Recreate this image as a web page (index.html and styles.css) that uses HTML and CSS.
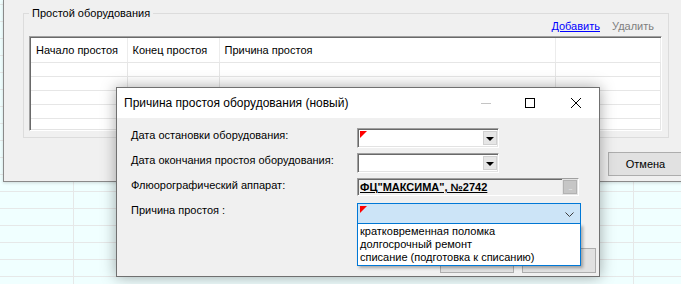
FILE: index.html
```html
<!DOCTYPE html>
<html lang="ru">
<head>
    <meta charset="UTF-8">
    <title>Простой оборудования</title>
    <link rel="stylesheet" href="styles.css">
</head>
<body>
<div class="main-window">
    <fieldset class="group">
        <legend>Простой оборудования</legend>
        <div class="group-links">
            <a href="#" class="link">Добавить</a>
            <span class="link disabled">Удалить</span>
        </div>
        <div class="grid">
            <table>
                <colgroup>
                    <col style="width: 96px">
                    <col style="width: 92px">
                    <col style="width: 336px">
                    <col>
                </colgroup>
                <tr class="grid-head">
                    <th>Начало простоя</th>
                    <th>Конец простоя</th>
                    <th>Причина простоя</th>
                    <th></th>
                </tr>
                <tr><td></td><td></td><td></td><td></td></tr>
                <tr><td></td><td></td><td></td><td></td></tr>
                <tr><td></td><td></td><td></td><td></td></tr>
                <tr><td></td><td></td><td></td><td></td></tr>
                <tr><td></td><td></td><td></td><td></td></tr>
            </table>
        </div>
    </fieldset>
    <div class="window-footer">
        <button class="btn">Отмена</button>
    </div>
</div>

<div class="dialog">
    <div class="titlebar">
        <span class="title">Причина простоя оборудования (новый)</span>
        <span class="tb-btn tb-min"><svg width="10" height="10" viewBox="0 0 10 10"><path d="M0 5.5h10" stroke="#c4c4c4" stroke-width="1"/></svg></span>
        <span class="tb-btn"><svg width="10" height="10" viewBox="0 0 10 10"><rect x="0.5" y="0.5" width="9" height="9" fill="none" stroke="#000" stroke-width="1"/></svg></span>
        <span class="tb-btn"><svg width="10" height="10" viewBox="0 0 10 10"><path d="M0 0L10 10M10 0L0 10" stroke="#000" stroke-width="1"/></svg></span>
    </div>
    <div class="dialog-body">
        <div class="form">
            <label class="form-label">Дата остановки оборудования:</label>
            <div class="date-box">
                <span class="required"></span>
                <span class="dd-btn"></span>
            </div>

            <label class="form-label">Дата окончания простоя оборудования:</label>
            <div class="date-box">
                <span class="dd-btn"></span>
            </div>

            <label class="form-label">Флюорографический аппарат:</label>
            <div class="ref-box">
                <span class="ref-text">ФЦ"МАКСИМА", №2742</span>
                <span class="ellipsis-btn">...</span>
            </div>

            <label class="form-label">Причина простоя :</label>
            <div class="combo">
                <span class="required"></span>
                <svg class="chevron" width="9" height="5" viewBox="0 0 9 5"><path d="M0.5 0.5L4.5 4.5L8.5 0.5" fill="none" stroke="#3c3c3c" stroke-width="1"/></svg>
                <ul class="combo-list">
                    <li>кратковременная поломка</li>
                    <li>долгосрочный ремонт</li>
                    <li>списание (подготовка к списанию)</li>
                </ul>
            </div>
        </div>
        <div class="dialog-buttons">
            <button class="btn dlg-btn"></button>
            <button class="btn dlg-btn"></button>
        </div>
    </div>
</div>
</body>
</html>
```

FILE: styles.css
```css
body {
    margin: 0;
    width: 681px;
    height: 284px;
    overflow: hidden;
    position: relative;
    font-family: "Liberation Sans", Arial, sans-serif;
    font-size: 11px;
    color: #000;
    background-color: #f0ffff;
    background-image:
        linear-gradient(#e6e8e8 1px, transparent 1px),
        linear-gradient(90deg, #e6e8e8 1px, transparent 1px);
    background-size: 100% 17px, 560px 100%;
    background-position: 0 4px, 73px 0;
}

/* окно позади */
.main-window {
    position: absolute;
    left: 3px;
    top: 0;
    width: 700px;
    height: 182px;
    box-sizing: border-box;
    padding: 6px 20px 0 19px;
    background-color: #f0f0f0;
    border-left: 1px solid #8a8a8a;
    border-bottom: 1px solid #8a8a8a;
    box-shadow: 0 1px 3px rgba(0, 0, 0, 0.15);
}

.group {
    width: 646px;
    box-sizing: border-box;
    margin: 0;
    padding: 0 6px 6px 5px;
    border: 1px solid #dcdcdc;
}

.group legend {
    padding: 0 3px;
    line-height: 14px;
}

.group-links {
    display: flex;
    justify-content: flex-end;
    gap: 12px;
    padding-right: 8px;
    margin-top: -1px;
    height: 14px;
    line-height: 14px;
    margin-bottom: 3px;
}

.link {
    color: #0000ff;
    text-decoration: underline;
}

.link.disabled {
    color: #7f7f7f;
    text-decoration: none;
}

.grid {
    height: 95px;
    box-sizing: border-box;
    overflow: hidden;
    background-color: #fff;
    border: 1px solid #ffffff;
    border-top-color: #a0a0a0;
    border-left-color: #a0a0a0;
    box-shadow: inset 1px 1px 0 #696969, inset -1px -1px 0 #e3e3e3;
    padding: 1px 0 0 1px;
}

.grid table {
    width: 100%;
    table-layout: fixed;
    border-collapse: collapse;
}

.grid th,
.grid td {
    padding: 0 0 0 5px;
    border-right: 1px solid #e6e6e6;
    border-bottom: 1px solid #e6e6e6;
    font-weight: normal;
    text-align: left;
    white-space: nowrap;
}

.grid-head th {
    height: 24px;
    border-right-color: #ececec;
}

.grid td {
    height: 13px;
}

.window-footer {
    display: flex;
    justify-content: flex-end;
    margin-top: 14px;
}

.btn {
    font-family: inherit;
    font-size: 11px;
    background-color: #e1e1e1;
    border: 1px solid #adadad;
    padding: 0;
    color: #000;
}

.window-footer .btn {
    width: 75px;
    height: 24px;
}

/* диалог */
.dialog {
    position: absolute;
    left: 116px;
    top: 87px;
    width: 484px;
    height: 190px;
    box-sizing: border-box;
    border: 1px solid #707070;
    background-color: #f0f0f0;
    box-shadow: 0 0 14px rgba(0, 0, 0, 0.35);
    display: flex;
    flex-direction: column;
}

.titlebar {
    height: 30px;
    display: flex;
    align-items: center;
    background-color: #fff;
}

.title {
    flex: 1;
    padding-left: 7px;
    font-size: 12px;
}

.tb-btn {
    width: 46px;
    height: 30px;
    display: flex;
    align-items: center;
    justify-content: center;
}

.tb-min {
    justify-content: flex-start;
    padding-left: 20px;
    box-sizing: border-box;
}

.dialog-body {
    flex: 1;
    display: flex;
    flex-direction: column;
    padding: 10px 3px 3px 14px;
}

.form {
    display: grid;
    grid-template-columns: 226px 224px;
    grid-auto-rows: 25px;
    align-items: start;
}

.form-label {
    line-height: 14px;
}

.date-box {
    position: relative;
    width: 142px;
    height: 20px;
    box-sizing: border-box;
    background-color: #fff;
    border: 1px solid #fff;
    border-top-color: #a0a0a0;
    border-left-color: #a0a0a0;
    box-shadow: inset 1px 1px 0 #696969, inset -1px -1px 0 #e3e3e3;
    display: flex;
    align-items: center;
    justify-content: flex-end;
    padding-right: 1px;
}

.dd-btn {
    width: 14px;
    height: 14px;
    box-sizing: border-box;
    background-color: #e6e6e6;
    border: 1px solid #d0d0d0;
    display: flex;
    align-items: center;
    justify-content: center;
}

.dd-btn::after {
    content: "";
    border-left: 4px solid transparent;
    border-right: 4px solid transparent;
    border-top: 4px solid #000;
    margin-top: 1px;
}

.required {
    position: absolute;
    left: 2px;
    top: 2px;
    width: 0;
    height: 0;
    border-top: 7px solid #ff0000;
    border-right: 7px solid transparent;
}

.ref-box {
    width: 222px;
    height: 18px;
    box-sizing: border-box;
    border: 1px solid #fff;
    border-top-color: #a0a0a0;
    border-left-color: #a0a0a0;
    box-shadow: inset 1px 1px 0 #696969;
    display: flex;
    align-items: center;
    padding: 0 1px 0 2px;
}

.ref-text {
    flex: 1;
    font-weight: bold;
    text-decoration: underline;
}

.ellipsis-btn {
    width: 14px;
    height: 14px;
    box-sizing: border-box;
    background-color: #c6c6c6;
    border: 1px solid #b2b2b2;
    outline: 1px solid #e4e4e4;
    font-size: 8px;
    line-height: 14px;
    text-align: center;
    color: #ececec;
    letter-spacing: -1px;
}

.combo {
    position: relative;
    width: 224px;
    height: 21px;
    box-sizing: border-box;
    background-color: #cce4f7;
    border: 1px solid #0078d7;
}

.chevron {
    position: absolute;
    right: 6px;
    top: 8px;
}

.combo-list {
    position: absolute;
    left: -1px;
    top: 20px;
    width: 224px;
    box-sizing: border-box;
    margin: 0;
    padding: 1px 0 1px;
    list-style: none;
    background-color: #fff;
    border: 1px solid #0078d7;
    border-top: 0;
    box-shadow: 2px 2px 3px rgba(0, 0, 0, 0.3);
    z-index: 2;
}

.combo-list li {
    line-height: 13px;
    padding-left: 2px;
}

.dialog-buttons {
    margin-top: auto;
    display: flex;
    justify-content: flex-end;
    gap: 8px;
}

.dlg-btn {
    width: 74px;
    height: 25px;
}
```
